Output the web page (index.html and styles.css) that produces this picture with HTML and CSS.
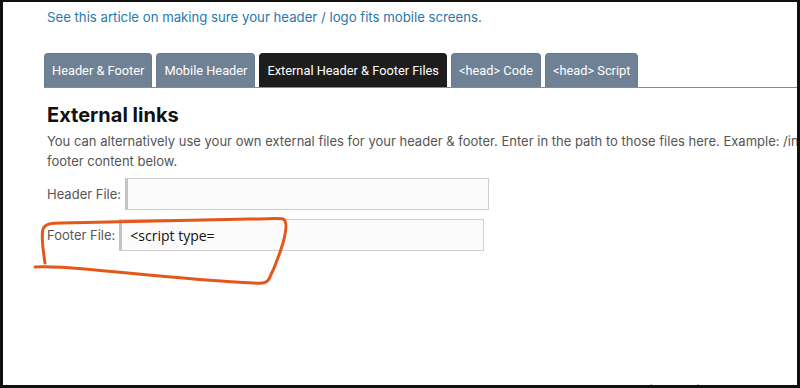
FILE: index.html
```html
<!DOCTYPE html>
<html lang="en">
<head>
  <meta charset="UTF-8">
  <title>Header &amp; Footer Settings</title>
  <link rel="stylesheet" href="styles.css">
</head>
<body>
  <div class="frame">
    <div class="page">
      <a class="help-link" href="#">See this article on making sure your header / logo fits mobile screens.</a>

      <!-- settings tabs -->
      <ul class="tabs">
        <li class="tab">Header &amp; Footer</li>
        <li class="tab">Mobile Header</li>
        <li class="tab active">External Header &amp; Footer Files</li>
        <li class="tab">&lt;head&gt; Code</li>
        <li class="tab">&lt;head&gt; Script</li>
      </ul>

      <div class="panel">
        <h2>External links</h2>
        <p class="intro">
          <span class="line">You can alternatively use your own external files for your header &amp; footer. Enter in the path to those files here. Example: /includes/header.html - this will replace the header &amp;</span><br>
          footer content below.
        </p>

        <div class="field">
          <label for="header-file">Header File:</label>
          <input type="text" id="header-file" class="header-input">
        </div>
        <div class="field">
          <label for="footer-file">Footer File:</label>
          <input type="text" id="footer-file" class="footer-input" value="<script type=">
        </div>
      </div>
    </div>

    <div class="version">Script Version 5.5.0</div>
  </div>

  <!-- hand-drawn annotation over the footer field -->
  <svg class="scribble" width="800" height="388" viewBox="0 0 800 388">
    <path d="M45 263 C43 250, 41 236, 43 229 C45 224, 50 223, 62 223 C120 222, 200 220, 250 219 C268 219, 278 218, 283 219 C288 221, 286 232, 283 243 C279 256, 273 271, 269 279 C267 283, 262 284, 254 283 C200 281, 140 274, 85 269 C62 267, 46 266, 35 267"
      fill="none" stroke="#e4571a" stroke-width="3" stroke-linecap="round" stroke-linejoin="round"/>
  </svg>
</body>
</html>
```

FILE: styles.css
```css
* {
  box-sizing: border-box;
}

html, body {
  margin: 0;
  padding: 0;
  height: 100%;
  overflow: hidden;
}

body {
  position: relative;
  background: #fff;
  font-family: 'Inter', 'Noto Sans', sans-serif;
}

.frame {
  height: 388px;
  border-style: solid;
  border-color: #111;
  border-width: 2px 3px 3px 3px;
  overflow: hidden;
  display: flex;
  flex-direction: column;
}

.page {
  padding: 4px 0 0 41px;
}

.help-link {
  display: inline-block;
  margin-left: 3px;
  color: #2a78ad;
  font-size: 13.2px;
  text-decoration: none;
  line-height: 20px;
}

.tabs {
  list-style: none;
  margin: 26px 0 0 0;
  padding: 0;
  display: flex;
  gap: 4px;
  border-bottom: 1px solid #8a8a8a;
  font-family: 'Roboto', 'Liberation Sans', sans-serif;
}

.tab {
  background: #6f8195;
  color: #fff;
  font-size: 12.8px;
  height: 34px;
  line-height: 34px;
  padding: 0 7px;
  border-radius: 4px 4px 0 0;
  border: 1px solid #6a7a8c;
  border-bottom: none;
}

.tab.active {
  background: #1d1d1d;
  border-color: #1d1d1d;
}

.panel {
  padding-left: 3px;
}

.panel h2 {
  margin: 15px 0 0 0;
  font-size: 20px;
  font-weight: 700;
  color: #111;
  line-height: 24px;
}

.intro {
  margin: 4px 0 0 0;
  font-size: 13px;
  line-height: 20px;
  color: #555;
}

.intro .line {
  white-space: nowrap;
}

.field {
  display: flex;
  align-items: center;
  margin-top: 9px;
}

.field:first-of-type {
  margin-top: 7px;
}

.field label {
  font-size: 13px;
  color: #555;
  margin-right: 4px;
}

.field input {
  height: 32px;
  border: 1px solid #cfcfcf;
  border-left: 3px solid #c3c3c3;
  background: #fbfbfb;
  font-family: 'Open Sans', 'Noto Sans', sans-serif;
  font-size: 14px;
  color: #111;
  padding: 0 8px;
  outline: none;
}

.header-input {
  width: 364px;
}

.footer-input {
  width: 365px;
}

.version {
  margin-top: auto;
  margin-bottom: -13px;
  align-self: flex-end;
  margin-right: 48px;
  font-size: 13px;
  color: #888;
}

.scribble {
  position: absolute;
  top: 0;
  left: 0;
  pointer-events: none;
}
```
